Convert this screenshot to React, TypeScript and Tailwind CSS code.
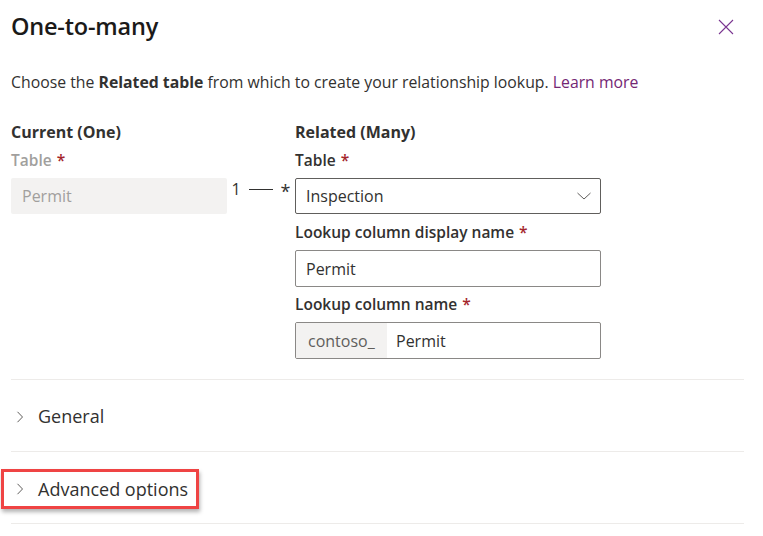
import React from "react";

const Req = () => <span className="text-[#a4262c] ml-[5px]">*</span>;

const Chevron = () => (
  <svg width="8" height="12" viewBox="0 0 8 12" className="text-[#605e5c] shrink-0">
    <path d="M1.5 0.8 L6.5 6 L1.5 11.2" fill="none" stroke="currentColor" strokeWidth="1" />
  </svg>
);

export default function App() {
  return (
    <div
      className="w-[763px] h-[536px] bg-white text-[#323130] overflow-hidden"
      style={{ fontFamily: '"Open Sans", "Noto Sans", sans-serif' }}
    >
      <div className="flex items-center justify-between pl-[11px] pr-[29px] h-[54px]">
        <h1 className="text-[23.5px] font-semibold text-[#1b1a19] tracking-[-0.2px]">One-to-many</h1>
        <svg width="16" height="16" viewBox="0 0 16 16" className="text-[#7a3691]">
          <path d="M1 1 L15 15 M15 1 L1 15" stroke="currentColor" strokeWidth="1.1" />
        </svg>
      </div>

      <p className="pl-[11px] mt-[17px] text-[15.8px] text-[#323130] leading-[22px]">
        Choose the <span className="font-bold">Related table</span> from which to create your relationship lookup.{" "}
        <span className="text-[#742774]">Learn more</span>
      </p>

      <div className="flex pl-[11px] mt-[25px]">
        <div className="w-[216px] flex flex-col">
          <div className="text-[16px] font-bold leading-[28px] h-[28px]">Current (One)</div>
          <div className="text-[15.5px] font-semibold text-[#a19f9d] leading-[28px] h-[28px] mb-[4px]">
            Table<Req />
          </div>
          <div className="h-[36px] bg-[#f3f2f1] rounded-[2px] flex items-center px-[11px] text-[16px] text-[#a19f9d]">
            Permit
          </div>
        </div>
        <div className="w-[68px] h-[92px] pt-[60px] flex justify-center items-start gap-[8px] text-[16px] text-[#323130] leading-[22px]">
          <span>1</span>
          <div className="w-[24px] h-px bg-[#323130] mt-[11px]" />
          <span className="text-[18px] leading-[26px]">*</span>
        </div>
        <div className="w-[306px] flex flex-col">
          <div className="text-[16px] font-bold leading-[28px] h-[28px]">Related (Many)</div>
          <div className="text-[15.5px] font-semibold leading-[28px] h-[28px] mb-[4px]">
            Table<Req />
          </div>
          <div className="h-[36px] border border-[#605e5c] rounded-[2px] flex items-center justify-between pl-[10px] pr-[8px] text-[16px]">
            <span>Inspection</span>
            <svg width="16" height="16" viewBox="0 0 16 16" className="text-[#605e5c]">
              <path d="M1.5 5 L8 11 L14.5 5" fill="none" stroke="currentColor" strokeWidth="1" />
            </svg>
          </div>
          <div className="text-[15.5px] font-semibold leading-[28px] mt-[4px] h-[28px] mb-[4px]">
            Lookup column display name<Req />
          </div>
          <div className="h-[37px] border border-[#8a8886] rounded-[2px] flex items-center pl-[10px] text-[16px]">
            Permit
          </div>
          <div className="text-[15.5px] font-semibold leading-[28px] mt-[3px] h-[28px] mb-[4px]">
            Lookup column name<Req />
          </div>
          <div className="h-[37px] border border-[#8a8886] rounded-[2px] flex text-[16px] overflow-hidden">
            <div className="w-[91px] bg-[#f3f2f1] flex items-center pl-[12px] text-[#605e5c]">contoso_</div>
            <div className="flex items-center pl-[9px]">Permit</div>
          </div>
        </div>
      </div>

      <div className="ml-[11px] mr-[19px] mt-[20px] border-t border-[#edebe9]">
        <div className="h-[71px] flex items-center gap-[14px] pl-[5px] pt-[2px] text-[18px] text-[#323130]">
          <Chevron />
          <span>General</span>
        </div>
        <div className="border-t border-[#edebe9] h-[72px] flex items-start pt-[17px]">
          <div className="ml-[-10px] h-[40px] w-[198px] border-[3px] border-[#ef4444] shadow-[1px_3px_4px_rgba(0,0,0,0.3)] flex items-center gap-[14px] pl-[12px] text-[18px]">
            <Chevron />
            <span>Advanced options</span>
          </div>
        </div>
        <div className="border-t border-[#edebe9]" />
      </div>
    </div>
  );
}
